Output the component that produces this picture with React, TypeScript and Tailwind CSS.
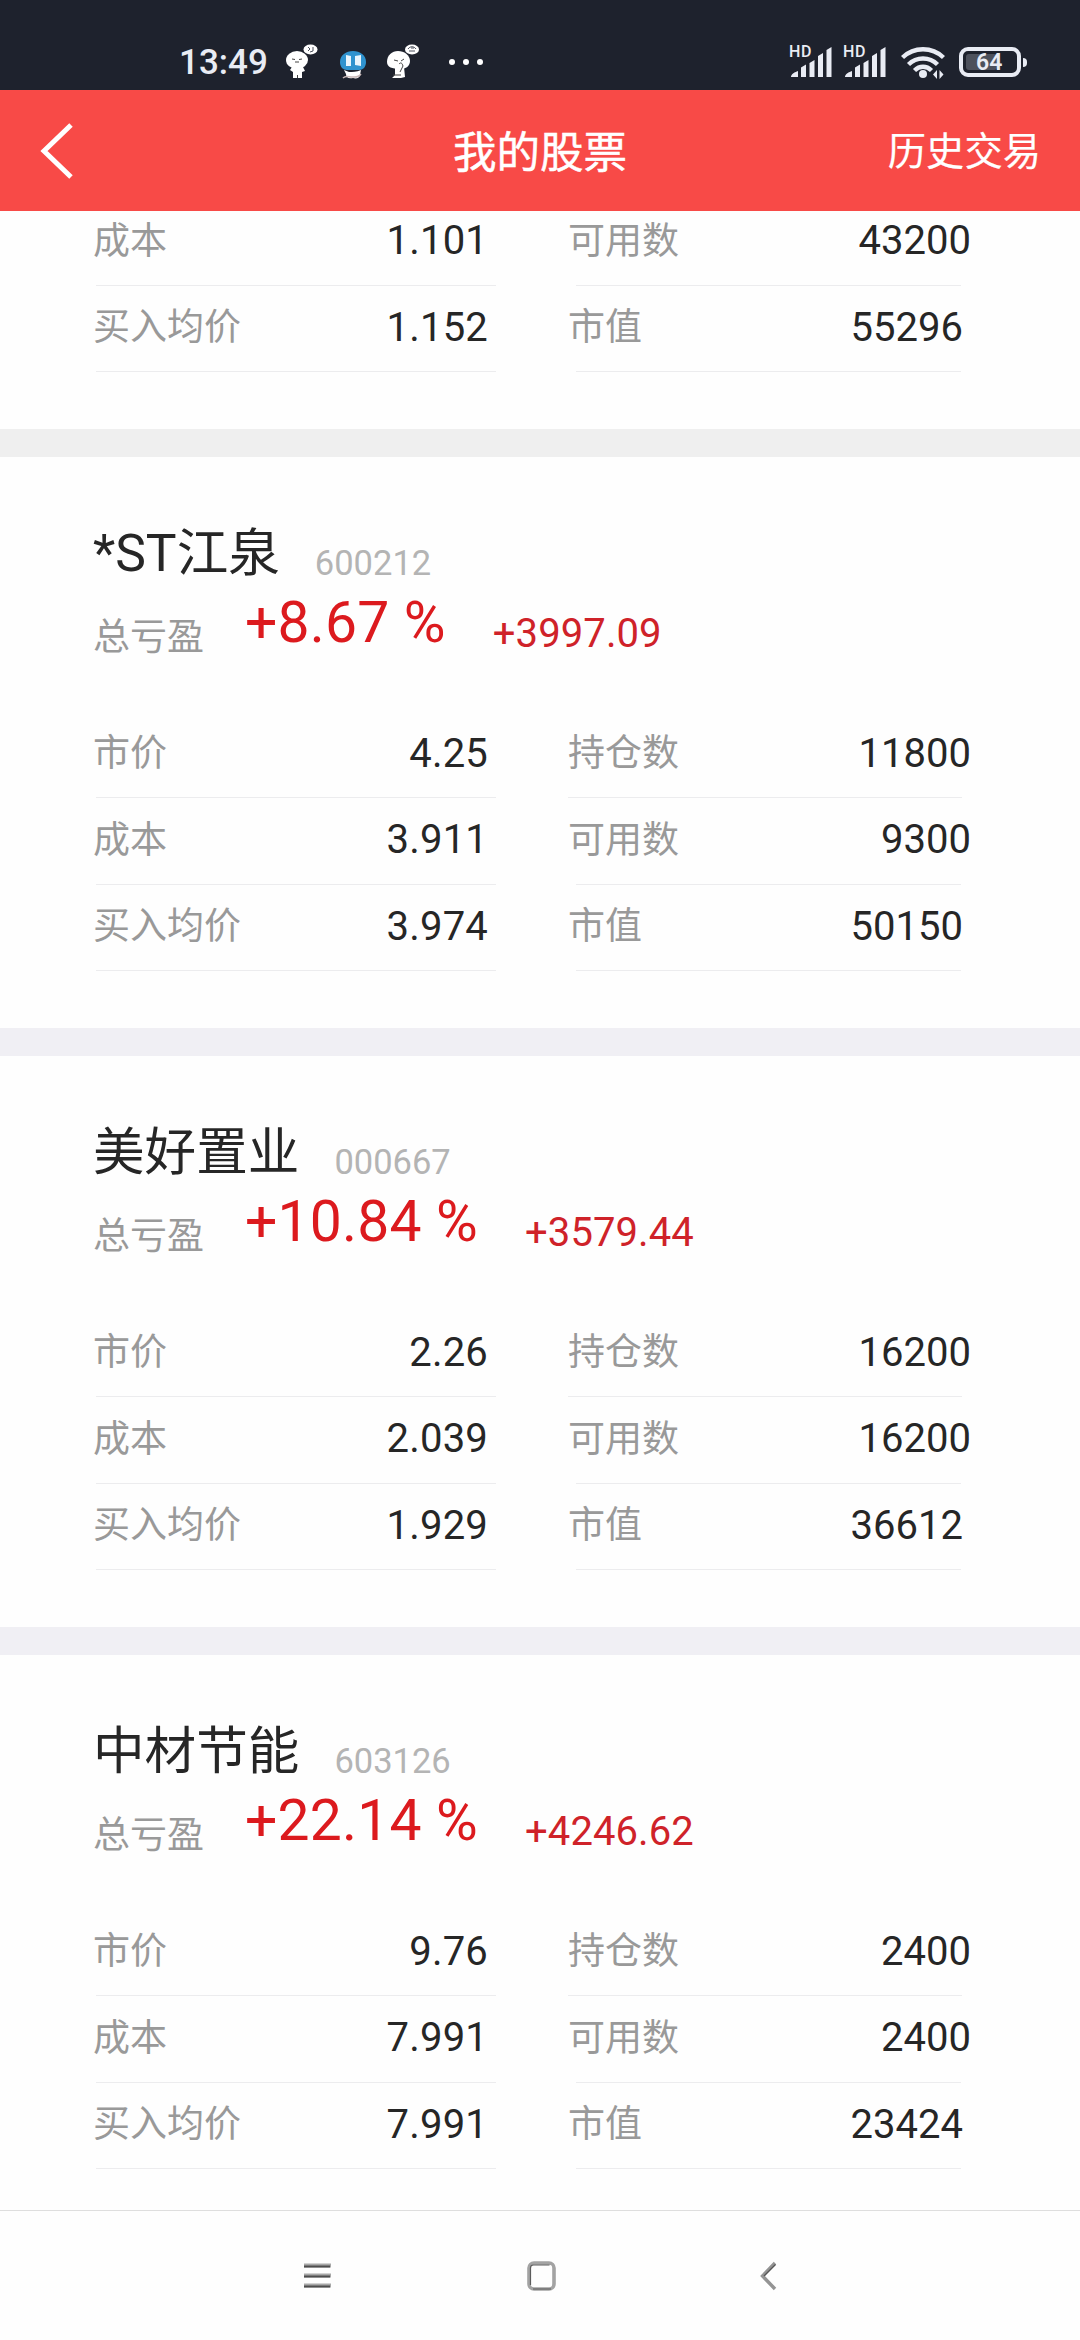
import React from 'react';

type Cell = { label: string; value: string };

type Stock = {
  name: string;
  code: string;
  percent: string;
  amount: string;
  left: Cell[];
  right: Cell[];
};

const STOCKS: Stock[] = [
  {
    name: '*ST江泉',
    code: '600212',
    percent: '+8.67 %',
    amount: '+3997.09',
    left: [
      { label: '市价', value: '4.25' },
      { label: '成本', value: '3.911' },
      { label: '买入均价', value: '3.974' },
    ],
    right: [
      { label: '持仓数', value: '11800' },
      { label: '可用数', value: '9300' },
      { label: '市值', value: '50150' },
    ],
  },
  {
    name: '美好置业',
    code: '000667',
    percent: '+10.84 %',
    amount: '+3579.44',
    left: [
      { label: '市价', value: '2.26' },
      { label: '成本', value: '2.039' },
      { label: '买入均价', value: '1.929' },
    ],
    right: [
      { label: '持仓数', value: '16200' },
      { label: '可用数', value: '16200' },
      { label: '市值', value: '36612' },
    ],
  },
  {
    name: '中材节能',
    code: '603126',
    percent: '+22.14 %',
    amount: '+4246.62',
    left: [
      { label: '市价', value: '9.76' },
      { label: '成本', value: '7.991' },
      { label: '买入均价', value: '7.991' },
    ],
    right: [
      { label: '持仓数', value: '2400' },
      { label: '可用数', value: '2400' },
      { label: '市值', value: '23424' },
    ],
  },
];

const Sticker = () => (
  <svg width="34" height="36" viewBox="0 0 34 36">
    <ellipse cx="25.5" cy="5.5" rx="7" ry="5" fill="#fff" />
    <path d="M23 3l2 2-2 2M28 3v4M25 8l3-1" stroke="#4a4f5a" strokeWidth="1" fill="none" />
    <ellipse cx="12" cy="16" rx="11" ry="9" fill="#fff" />
    <path d="M7 23h11l2 4-3 1v6H8v-6l-3-2z" fill="#fff" />
    <path d="M7 15l3 .5M14 15.5l3-.5M10 18h4M12.5 31v3" stroke="#444" strokeWidth="1" fill="none" />
  </svg>
);

const BlueSticker = () => (
  <svg width="28" height="30" viewBox="0 0 28 30">
    <path d="M1 12C1 5 7 1 14 1s13 4 13 11c0 5-3 8-7 8H8c-4 0-7-3-7-8z" fill="#2f93cf" />
    <path d="M7 5l5 1v10H7zM16 6l6-1v11l-6-1z" fill="#e8f5fd" />
    <path d="M5 20l5 2c4 0 7 0 12-2l-1 5c0 3-4 4-7 3-5 1-7-1-7-4z" fill="#fff" />
    <path d="M4 28c3-3 6-1 9-1s6 1 9-3" stroke="#c9b9b9" strokeWidth="1.5" fill="none" />
  </svg>
);

const CryingSticker = () => (
  <svg width="34" height="36" viewBox="0 0 34 36">
    <ellipse cx="26" cy="5.5" rx="7" ry="5" fill="#fff" />
    <path d="M22 5c2-3 6-3 8 0M23 7h6M25 4h3" stroke="#4a4f5a" strokeWidth="1" fill="none" />
    <path d="M1 18C1 11 6 7 12 7s12 4 12 10c0 5-4 8-10 8-8 0-13-2-13-7z" fill="#fff" />
    <path d="M9 23h9l1 10-4 1H6l3-3z" fill="#fff" />
    <path d="M8 16l4 1M15 17l3-2M13 20c2-2 3-1 4 2l-3 6M7 31h8" stroke="#444" strokeWidth="1" fill="none" />
  </svg>
);

const Signal = () => (
  <div className="relative w-[42px] h-8">
    <span className="absolute -left-px -top-[3px] text-[16px] leading-[18px] font-medium tracking-[0.6px] whitespace-nowrap">HD</span>
    <svg width="42" height="32" viewBox="0 0 42 32" fill="#e9ecf4">
      <path d="M1 31c0-3 4-5 7-6v6zM11 21.5l5-3V31h-5zM19.5 17l5-3v17h-5zM28 10l5-3v24h-5zM36.5 4l5-3v30h-5z" />
    </svg>
  </div>
);

const Wifi = () => (
  <svg width="44" height="34" viewBox="0 0 44 34" fill="none" stroke="#e9ecf4" strokeWidth="4.4">
    <path d="M1.5 11.5C13 .5 31 .5 42.5 11.5" />
    <path d="M7.5 18.5C15.5 10.5 28.5 10.5 36.5 18.5" />
    <path d="M13.5 24.5C18.5 19.5 25.5 19.5 30.5 24.5" />
    <circle cx="22" cy="28" r="4" fill="#e9ecf4" stroke="none" />
    <path d="M36 24v9l-4-4.5zM38.5 33v-9l4 4.5z" fill="#e9ecf4" stroke="none" />
  </svg>
);

const Battery = () => (
  <div className="flex items-center gap-0.5">
    <div className="w-[62px] h-[30px] rounded-[9px] border-4 border-[#e9ecf4] p-[3px] flex">
      <div className="relative w-[31px] bg-[#4d515c] rounded-[3px]">
        <span className="absolute left-[10px] -top-[2px] text-[23px] leading-[22px] font-semibold text-[#e9ecf4]">64</span>
      </div>
    </div>
    <div className="w-1 h-[9px] rounded-r-sm bg-[#e9ecf4]" />
  </div>
);

const StatusBar = () => (
  <div className="h-[90px] bg-[#1e222d] flex items-start pl-[179px] pr-[53px] text-[#e9ecf4]">
    <span className="mt-[45px] w-[89px] text-[35px] leading-[35px] font-medium">13:49</span>
    <div className="mt-[44px] ml-[17px] flex items-start">
      <Sticker />
      <div className="ml-[20px] mt-[6px]"><BlueSticker /></div>
      <div className="ml-[19px]"><CryingSticker /></div>
    </div>
    <div className="mt-[59px] ml-[29px] flex gap-2">
      <i className="w-1.5 h-1.5 rounded-full bg-white" />
      <i className="w-1.5 h-1.5 rounded-full bg-white" />
      <i className="w-1.5 h-1.5 rounded-full bg-white" />
    </div>
    <div className="ml-auto mt-[46px] flex items-start">
      <Signal />
      <div className="ml-[12px]"><Signal /></div>
      <div className="ml-[15px]"><Wifi /></div>
      <div className="ml-[14px] mt-[1px]"><Battery /></div>
    </div>
  </div>
);

const Header = () => (
  <header className="h-[121px] bg-[#f84a47] text-white grid grid-cols-3 items-center pl-[39px] pr-[39px]">
    <svg width="36" height="56" viewBox="0 0 36 56" fill="none" stroke="#fff" strokeWidth="5">
      <path d="M32 2L5 28l27 26" />
    </svg>
    <h1 className="text-center text-[43.5px] leading-none mt-[6px] [-webkit-text-stroke:0.5px_white]">我的股票</h1>
    <span className="text-right text-[38.3px] leading-none mt-[4px] [-webkit-text-stroke:0.2px_white]">历史交易</span>
  </header>
);

const Row = ({ left, right, first, last }: { left: Cell; right: Cell; first?: boolean; last?: boolean }) => (
  <div className="h-[86.66px] flex gap-[72px] pl-[93px] text-[40px] leading-none text-[#262626]">
    <div className="w-[403px] flex flex-col">
      <div className="flex-1 flex items-center justify-between pr-[8px] pb-[1px]">
        <span className="text-[37px] text-[#999]">{left.label}</span>
        <span className="tracking-[0.2px]">{left.value}</span>
      </div>
      <div className="ml-[3px] h-px bg-[#ececee]" />
    </div>
    <div className="w-[403px] flex flex-col">
      <div className={last ? 'flex-1 flex items-center justify-between pr-[8px] pb-[1px]' : 'flex-1 flex items-center justify-between pb-[1px]'}>
        <span className="text-[37px] text-[#999]">{right.label}</span>
        <span>{right.value}</span>
      </div>
      <div className={first ? 'mr-[9px] h-px bg-[#ececee]' : 'ml-[8px] mr-[10px] h-px bg-[#ececee]'} />
    </div>
  </div>
);

const StockCard = ({ stock }: { stock: Stock }) => (
  <section className="bg-[#fefefe] pt-[70px] pb-[57px]">
    <div className="flex items-end pl-[93px] h-[52px]">
      <h2 className="text-[51.6px] leading-none text-[#262626]">{stock.name}</h2>
      <span className="ml-[35px] -mb-[1px] text-[34.5px] leading-none text-[#b4b4b4]">{stock.code}</span>
    </div>
    <div className="mt-[15px] h-[62px] flex items-end pl-[93px] leading-none text-[#dc1a1e]">
      <span className="w-[152px] text-[37px] text-[#999]">总亏盈</span>
      <span className="mb-[5px] text-[57px] tracking-[0.2px]">{stock.percent}</span>
      <span className="ml-[47px] mb-[2px] text-[40px] tracking-[0.1px] text-[#cf2229]">{stock.amount}</span>
    </div>
    <div className="mt-[55px]">
      {stock.left.map((cell, i) => (
        <Row key={cell.label} left={cell} right={stock.right[i]} first={i === 0} last={i === 2} />
      ))}
    </div>
  </section>
);

const NavBar = () => (
  <nav className="h-[130px] bg-[#fefefe] border-t border-[#dedede] flex items-start pl-[304px] pt-[50px]">
    <svg width="27" height="30" viewBox="0 0 27 30">
      <path d="M0 4.5h27M0 14.5h27M0 24.5h27" stroke="#a8a8a8" strokeWidth="4" />
      <path d="M0 5.5h26M0 15.5h26M0 25.5h26" stroke="#4e4e4e" strokeWidth="2" />
    </svg>
    <svg className="ml-[196px]" width="30" height="30" viewBox="0 0 30 30" fill="none">
      <rect x="2" y="2" width="25" height="26" rx="5" stroke="#a3a3a3" strokeWidth="3.6" />
      <path d="M3.5 24V7q0-3 3-3h16M6 28h18" stroke="#5c5c5c" strokeWidth="1.2" />
    </svg>
    <svg className="ml-[203px]" width="17" height="30" viewBox="0 0 17 30" fill="none">
      <path d="M15 2L2.5 15 15 28" stroke="#949494" strokeWidth="3.4" />
      <path d="M15.5 3.5L4 15" stroke="#555" strokeWidth="1.2" />
    </svg>
  </nav>
);

const App = () => (
  <div className="w-[1080px] h-[2340px] flex flex-col overflow-hidden bg-[#fefefe] font-['Roboto','Noto_Sans_CJK_SC',sans-serif]">
    <StatusBar />
    <Header />
    <main className="flex-1 min-h-0 overflow-hidden">
      {/* tail of a card that is scrolled under the header */}
      <section className="-mt-3 pb-[57px]">
        <Row left={{ label: '成本', value: '1.101' }} right={{ label: '可用数', value: '43200' }} />
        <Row left={{ label: '买入均价', value: '1.152' }} right={{ label: '市值', value: '55296' }} last />
      </section>
      {STOCKS.map((stock, i) => (
        <React.Fragment key={stock.code}>
          <div className={i === 0 ? 'h-7 bg-[#efefef]' : 'h-7 bg-[#f0eff4]'} />
          <StockCard stock={stock} />
        </React.Fragment>
      ))}
    </main>
    <NavBar />
  </div>
);

export default App;
